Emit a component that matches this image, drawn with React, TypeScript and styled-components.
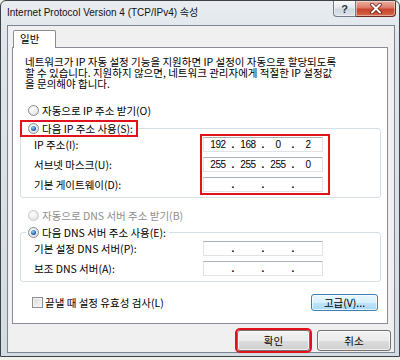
import React from "react";
import styled, { createGlobalStyle } from "styled-components";

const GlobalStyle = createGlobalStyle`
  html, body { margin: 0; padding: 0; }
  body {
    background: #f1f0ea;
    font-family: "Noto Sans CJK KR", "Noto Sans", sans-serif;
    color: #000;
  }
  * { box-sizing: border-box; }
`;

const Window = styled.div`
  width: 400px;
  height: 357px;
  border: 1px solid #3d4349;
  border-radius: 6px 6px 0 0;
  background: linear-gradient(180deg, #e9edf1 0%, #dfe5eb 12%, #d3dbe3 100%);
  display: flex;
  flex-direction: column;
  overflow: hidden;
`;

const TitleBar = styled.div`
  height: 24px;
  flex: none;
  display: flex;
  align-items: flex-start;
  padding: 0 3px 0 6px;
`;

const Title = styled.div`
  flex: 1;
  font-family: "Liberation Sans", "Noto Sans CJK KR", sans-serif;
  font-size: 10px;
  line-height: 24px;
  white-space: nowrap;
  color: #111;
`;

const Captions = styled.div`
  display: flex;
  height: 16px;
`;

const CaptionButton = styled.div<{ $close?: boolean }>`
  width: ${(p) => (p.$close ? 40 : 23)}px;
  height: 16px;
  display: flex;
  align-items: center;
  justify-content: center;
  border: 1px solid ${(p) => (p.$close ? "#6e281d" : "#6f7b88")};
  border-top: none;
  border-left: ${(p) => (p.$close ? "none" : "1px solid #6f7b88")};
  border-radius: ${(p) => (p.$close ? "0 0 4px 0" : "0 0 0 4px")};
  background: ${(p) =>
    p.$close
      ? "linear-gradient(180deg, #eab0a3 0%, #dd7b66 45%, #c8442b 55%, #d2664a 100%)"
      : "linear-gradient(180deg, #f7f9fb 0%, #e3e8ed 45%, #cfd6de 55%, #dde3e9 100%)"};
  box-shadow: inset 0 0 0 1px rgba(255, 255, 255, 0.45);
  font-family: "Liberation Sans", sans-serif;
  font-size: 11px;
  font-weight: bold;
  color: #2b343d;
`;

const FrameBody = styled.div`
  flex: 1;
  min-height: 0;
  display: flex;
  padding: 0 4px 3px 6px;
`;

const Client = styled.div`
  flex: 1;
  display: flex;
  flex-direction: column;
  background: #f0f0f0;
  border: 1px solid #7b8591;
  padding: 4px 3px 1px 4px;
`;

const TabStrip = styled.div`
  display: flex;
  height: 17px;
  flex: none;
`;

const Tab = styled.div`
  position: relative;
  z-index: 1;
  margin-left: 1px;
  width: 43px;
  height: 18px;
  background: #fff;
  border: 1px solid #898c95;
  border-bottom: none;
  border-radius: 2px 2px 0 0;
  font-size: 10.5px;
  line-height: 16px;
  padding-left: 6px;
`;

const Panel = styled.div`
  flex: 1;
  margin-right: 3px;
  background: #fff;
  border: 1px solid #898c95;
  display: flex;
  flex-direction: column;
  padding: 8px 6px 0 7px;
`;

const Paragraph = styled.div`
  margin-left: 5px;
  font-size: 10.5px;
  line-height: 11px;
  white-space: nowrap;
`;

const RadioRow = styled.div<{ $disabled?: boolean }>`
  display: flex;
  align-items: center;
  gap: 3px;
  height: 18px;
  margin-top: ${(p) => (p.$disabled ? 8 : 12)}px;
  padding-left: 8px;
  font-size: 10.5px;
  color: ${(p) => (p.$disabled ? "#8e8e8e" : "#000")};
`;

const RadioCircle = styled.span<{ $checked?: boolean; $disabled?: boolean }>`
  width: 11px;
  height: 11px;
  flex: none;
  border-radius: 50%;
  border: 1px solid ${(p) => (p.$disabled ? "#c9c9c9" : "#8a8c8e")};
  background: radial-gradient(circle at 40% 35%, #ffffff 0%, #ececec 55%, #cfd2d4 100%);
  display: flex;
  align-items: center;
  justify-content: center;
  &::after {
    content: "";
    display: ${(p) => (p.$checked ? "block" : "none")};
    width: 5px;
    height: 5px;
    border-radius: 50%;
    background: radial-gradient(circle at 40% 35%, #9fdcff 0%, #2a6cb5 55%, #0d2f63 100%);
  }
`;

const Group = styled.div<{ $gap: number }>`
  margin-top: ${(p) => p.$gap}px;
  border: 1px solid #d5dfe5;
  border-radius: 3px;
  display: flex;
  flex-direction: column;
  padding-bottom: 5px;
`;

const Legend = styled.div<{ $highlight?: boolean }>`
  align-self: flex-start;
  margin-top: -9px;
  margin-left: ${(p) => (p.$highlight ? -1 : 5)}px;
  height: 17px;
  display: flex;
  align-items: center;
  gap: 3px;
  background: #fff;
  border: ${(p) => (p.$highlight ? "2px solid #e2121b" : "none")};
  padding: ${(p) => (p.$highlight ? "0 3px 0 6px" : "0 3px 0 2px")};
  font-size: 10.5px;
`;

const Fields = styled.div`
  display: flex;
  padding-left: 13px;
`;

const Labels = styled.div`
  width: 169px;
  display: flex;
  flex-direction: column;
  gap: 5px;
`;

const Label = styled.div`
  height: 15px;
  font-size: 10.5px;
  line-height: 15px;
  white-space: nowrap;
`;

const Inputs = styled.div<{ $highlight?: boolean }>`
  display: flex;
  flex-direction: column;
  gap: 5px;
  padding-right: 4px;
  outline: ${(p) => (p.$highlight ? "2px solid #e2121b" : "none")};
  outline-offset: 1px;
`;

const Input = styled.div`
  width: 120px;
  height: 15px;
  display: flex;
  padding-left: 1px;
  background: #fff;
  border: 1px solid #dfe3e8;
  border-top-color: #a9afb7;
  font-family: "Liberation Sans", sans-serif;
  font-size: 10px;
  line-height: 13px;
`;

const Octet = styled.span`
  width: 26px;
  text-align: center;
  letter-spacing: -0.4px;
`;

const Dot = styled.span`
  width: 4px;
  text-align: center;
  font-weight: bold;
`;

const CheckRow = styled.div`
  margin-top: 11px;
  height: 18px;
  display: flex;
  align-items: center;
  justify-content: space-between;
  padding-left: 12px;
`;

const CheckLabel = styled.div`
  display: flex;
  align-items: center;
  gap: 2px;
  font-size: 10.5px;
`;

const CheckBox = styled.span`
  width: 11px;
  height: 11px;
  border: 1px solid #8e8f8f;
  background: linear-gradient(135deg, #dcdcdc 0%, #f6f6f6 100%);
  box-shadow: inset 0 0 0 1px #f4f4f4;
`;

const Button = styled.div<{ $width: number; $height: number; $focus?: boolean; $mark?: boolean }>`
  width: ${(p) => p.$width}px;
  height: ${(p) => p.$height}px;
  display: flex;
  align-items: center;
  justify-content: center;
  border: 1px solid ${(p) => (p.$focus ? "#3c7fb1" : "#707070")};
  border-radius: 3px;
  background: ${(p) =>
    p.$focus
      ? "linear-gradient(180deg, #eaf6fd 0%, #d9f0fc 50%, #bee6fd 50%, #a7d9f5 100%)"
      : "linear-gradient(180deg, #f2f2f2 0%, #ebebeb 50%, #dddddd 50%, #cfcfcf 100%)"};
  box-shadow: inset 0 0 0 1px rgba(255, 255, 255, 0.7);
  font-size: 10.5px;
  outline: ${(p) => (p.$mark ? "2px solid #e2121b" : "none")};
  outline-offset: 0;
`;

const ButtonRow = styled.div`
  margin-top: 6px;
  height: 21px;
  flex: none;
  display: flex;
  justify-content: flex-end;
  gap: 7px;
`;

const IpField = ({ parts }: { parts: string[] }) => (
  <Input>
    {parts.map((v, i) => (
      <React.Fragment key={i}>
        {i > 0 && <Dot>.</Dot>}
        <Octet>{v}</Octet>
      </React.Fragment>
    ))}
  </Input>
);

const empty = ["", "", "", ""];

export default function App() {
  return (
    <>
      <GlobalStyle />
      <Window>
        <TitleBar>
          <Title>Internet Protocol Version 4 (TCP/IPv4) 속성</Title>
          <Captions>
            <CaptionButton>?</CaptionButton>
            <CaptionButton $close>
              <svg width="14" height="11" viewBox="0 0 14 11">
                <path d="M3 1.5 L11 9.5 M11 1.5 L3 9.5" stroke="#5a1b12" strokeWidth="3.6" strokeLinecap="round" />
                <path d="M3 1.5 L11 9.5 M11 1.5 L3 9.5" stroke="#ffffff" strokeWidth="2" strokeLinecap="round" />
              </svg>
            </CaptionButton>
          </Captions>
        </TitleBar>
        <FrameBody>
          <Client>
            <TabStrip>
              <Tab>일반</Tab>
            </TabStrip>
            <Panel>
              <Paragraph>
                네트워크가 IP 자동 설정 기능을 지원하면 IP 설정이 자동으로 할당되도록
                <br />
                할 수 있습니다. 지원하지 않으면, 네트워크 관리자에게 적절한 IP 설정값
                <br />
                을 문의해야 합니다.
              </Paragraph>

              <RadioRow>
                <RadioCircle />
                자동으로 IP 주소 받기(O)
              </RadioRow>

              <Group $gap={9}>
                <Legend $highlight>
                  <RadioCircle $checked />
                  다음 IP 주소 사용(S):
                </Legend>
                <Fields>
                  <Labels>
                    <Label>IP 주소(I):</Label>
                    <Label>서브넷 마스크(U):</Label>
                    <Label>기본 게이트웨이(D):</Label>
                  </Labels>
                  <Inputs $highlight>
                    <IpField parts={["192", "168", "0", "2"]} />
                    <IpField parts={["255", "255", "255", "0"]} />
                    <IpField parts={empty} />
                  </Inputs>
                </Fields>
              </Group>

              <RadioRow $disabled>
                <RadioCircle $disabled />
                자동으로 DNS 서버 주소 받기(B)
              </RadioRow>

              <Group $gap={8}>
                <Legend>
                  <RadioCircle $checked />
                  다음 DNS 서버 주소 사용(E):
                </Legend>
                <Fields>
                  <Labels>
                    <Label>기본 설정 DNS 서버(P):</Label>
                    <Label>보조 DNS 서버(A):</Label>
                  </Labels>
                  <Inputs>
                    <IpField parts={empty} />
                    <IpField parts={empty} />
                  </Inputs>
                </Fields>
              </Group>

              <CheckRow>
                <CheckLabel>
                  <CheckBox />
                  끝낼 때 설정 유효성 검사(L)
                </CheckLabel>
                <Button $width={67} $height={17} $focus style={{ marginRight: 3 }}>
                  고급(V)...
                </Button>
              </CheckRow>
            </Panel>
            <ButtonRow>
              <Button $width={73} $height={21} $mark>
                확인
              </Button>
              <Button $width={74} $height={21}>
                취소
              </Button>
            </ButtonRow>
          </Client>
        </FrameBody>
      </Window>
    </>
  );
}
